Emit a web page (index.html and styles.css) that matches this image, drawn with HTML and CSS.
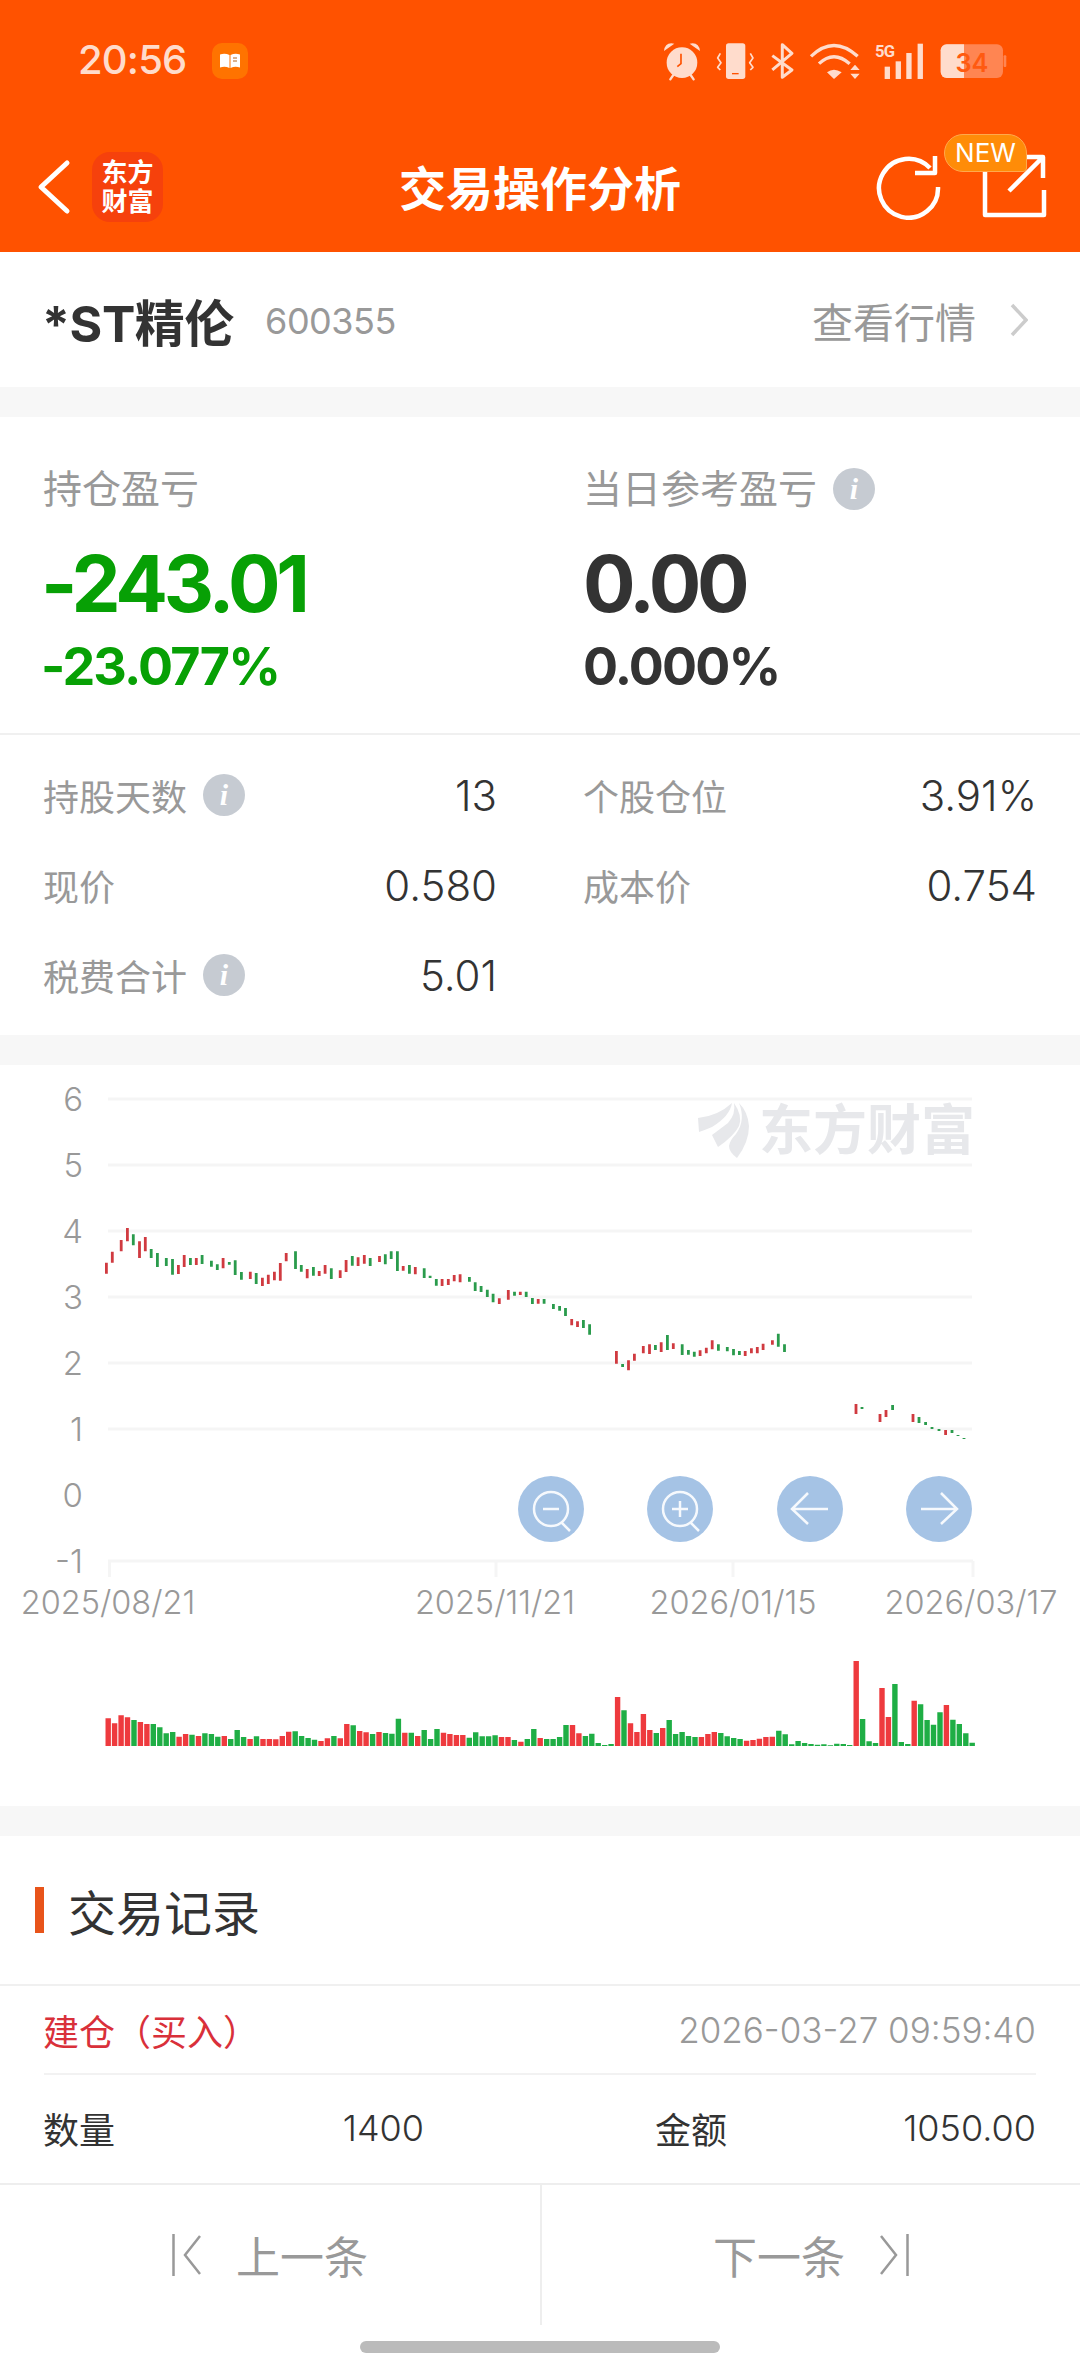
FILE: index.html
```html
<!DOCTYPE html>
<html lang="zh-CN">
<head>
<meta charset="utf-8">
<title>交易操作分析</title>
<link rel="stylesheet" href="styles.css">
</head>
<body>
<div class="app">
  <header class="head">
    <div class="status">
      <div class="status-left">
        <span class="time">20:56</span>
        <span class="note-icon">
          <svg viewBox="0 0 20 16" width="20" height="16"><path class="note-book" d="M0 1.5q5-1.5 9.5.5v13q-4.500-2-9.500-.5zM10.500 2q4.500-2 9.500-.5v13q-5-1.500-9.500.5z"/><path class="note-line" d="M13 5h4M13 8h4"/></svg>
        </span>
      </div>
      <div class="status-right">
        <svg class="si si-alarm" viewBox="100 120 115 120"><circle cx="157" cy="185" r="46" class="f"/><path class="f" d="M103 150Q106 122 134 128zM211 150Q208 122 180 128z"/><path class="s7" d="M131 222l-9 13M183 222l9 13"/><path class="hand" d="M154 158V188L143 197"/></svg>
        <svg class="si si-vib" viewBox="263 122 115 114"><rect x="293" y="126" width="58" height="107" rx="8" class="f"/><rect x="311" y="215" width="20" height="4" class="o"/><path class="s5" d="M276 156l-8 14 10 14-10 14 8 8M366 156l8 14-10 14 10 14-8 8"/></svg>
        <svg class="si si-bt" viewBox="424 124 74 112"><path class="s9" d="M431 165L490 208L461 230V132L490 158L431 208"/></svg>
        <svg class="si si-wifi" viewBox="543 122 156 114"><path class="s10" d="M549 165Q617 100 689 165M573 187Q617 145 665 187"/><path class="f" d="M597 213Q617 198 641 213L618 233zM667 206L681 190L695 206zM667 217H695L681 233z"/></svg>
        <svg class="si si-sig" viewBox="738 122 146 114"><text x="738" y="167" class="five-g">5G</text><rect x="767" y="196" width="16" height="37" class="f"/><rect x="800" y="180" width="16" height="53" class="f"/><rect x="832" y="155" width="16" height="78" class="f"/><rect x="866" y="127" width="16" height="106" class="f"/></svg>
        <svg class="si si-bat" viewBox="931 128 202 108"><rect x="933" y="132" width="187" height="101" rx="18" class="dim"/><rect x="1122" y="165" width="8" height="35" rx="3" class="dim"/><path class="f" d="M951 132H1003V233H951a18 18 0 0 1-18-18V150a18 18 0 0 1 18-18z"/><text x="1027" y="215" class="bat-num">34</text></svg>
      </div>
    </div>
    <nav class="nav">
      <div class="nav-left">
        <svg class="back" viewBox="0 0 34 56" width="34" height="56"><path d="M30 4L4 28L30 52"/></svg>
        <div class="logo"><span>东方</span><span>财富</span></div>
      </div>
      <h1 class="title">交易操作分析</h1>
      <div class="nav-right">
        <svg class="refresh" viewBox="0 0 66 66" width="66" height="66"><path d="M63 33A29.500 29.500 0 1 1 55 14"/><path d="M40 19H60V2"/></svg>
        <div class="share-wrap">
          <svg class="share" viewBox="0 0 66 66" width="66" height="66"><path d="M62 36V61H3V10"/><path d="M27 37L61 3M40 3H61V24"/></svg>
          <span class="new">NEW</span>
        </div>
      </div>
    </nav>
  </header>

  <section class="stock">
    <div class="stock-name"><strong>*ST精伦</strong><span class="code">600355</span></div>
    <div class="stock-link"><span>查看行情</span><svg class="chev" viewBox="0 0 18 34" width="18" height="34"><path d="M2 2L16 17L2 32"/></svg></div>
  </section>

  <section class="panel">
    <div class="pnl">
      <div class="pnl-col">
        <div class="pnl-label">持仓盈亏</div>
        <div class="pnl-big down">-243.01</div>
        <div class="pnl-pct down">-23.077%</div>
      </div>
      <div class="pnl-col">
        <div class="pnl-label">当日参考盈亏<i class="info">i</i></div>
        <div class="pnl-big">0.00</div>
        <div class="pnl-pct">0.000%</div>
      </div>
    </div>
    <div class="stats">
      <div class="stat"><span class="stat-l">持股天数<i class="info">i</i></span><span class="stat-v">13</span></div>
      <div class="stat"><span class="stat-l">个股仓位</span><span class="stat-v">3.91%</span></div>
      <div class="stat"><span class="stat-l">现价</span><span class="stat-v">0.580</span></div>
      <div class="stat"><span class="stat-l">成本价</span><span class="stat-v">0.754</span></div>
      <div class="stat"><span class="stat-l">税费合计<i class="info">i</i></span><span class="stat-v">5.01</span></div>
    </div>
  </section>

  <section class="chart">
    <svg class="chart-svg" viewBox="0 1065 1080 741" width="1080" height="741">
      <path class="flame" d="M698 1118Q718 1116 732 1103Q730 1116 712 1127Q705 1130 699 1132zM712 1135L728 1123Q736 1114 734 1103Q743 1116 739 1126Q734 1136 718 1147zM739 1103Q748 1112 749 1126Q749 1142 737 1158Q729 1152 729 1146Q730 1140 736 1134Q746 1120 739 1103z"/>
      <text x="759" y="1150" class="wm">东方财富</text>
      <path class="grid" d="M108 1099H972M108 1165H972M108 1231H972M108 1297H972M108 1363H972M108 1429H972M108 1561H973M109.500 1561V1577M496 1561V1577M733 1561V1577M973 1561V1577"/>
      <g class="ylab">
        <text x="83" y="1111">6</text><text x="83" y="1177">5</text><text x="83" y="1243">4</text><text x="83" y="1309">3</text><text x="83" y="1375">2</text><text x="83" y="1441">1</text><text x="83" y="1507">0</text><text x="83" y="1573">-1</text>
      </g>
      <g class="xlab">
        <text x="108" y="1614">2025/08/21</text><text x="495" y="1614">2025/11/21</text><text x="733" y="1614">2026/01/15</text><text x="971" y="1614">2026/03/17</text>
      </g>
      <path id="candle-r" class="candle-r"/>
      <path id="candle-g" class="candle-g"/>
      <path id="vol-r" class="vol-r"/>
      <path id="vol-g" class="vol-g"/>
      <g class="btn">
        <circle cx="551" cy="1509" r="33"/><circle cx="680" cy="1509" r="33"/><circle cx="810" cy="1509" r="33"/><circle cx="939" cy="1509" r="33"/>
      </g>
      <g class="btn-icon">
        <circle cx="551" cy="1509" r="17"/><path d="M562 1523L570 1531M543 1509H559"/>
        <circle cx="680" cy="1509" r="17"/><path d="M691 1523L699 1531M672 1509H688M680 1501V1517"/>
        <path d="M828 1509H793M808 1493L792 1509L808 1524"/>
        <path d="M921 1509H956M941 1493L957 1509L941 1524"/>
      </g>
    </svg>
  </section>

  <section class="trades">
    <div class="trades-head"><span class="mark"></span><h2>交易记录</h2></div>
    <div class="trade">
      <div class="trade-top"><span class="trade-type">建仓（买入）</span><span class="trade-date">2026-03-27 09:59:40</span></div>
      <div class="trade-grid">
        <div class="trade-cell cell-a"><span class="cell-l">数量</span><span class="cell-v">1400</span></div>
        <div class="trade-cell cell-b"><span class="cell-l">金额</span><span class="cell-v">1050.00</span></div>
      </div>
    </div>
  </section>

  <footer class="foot">
    <div class="pager">
      <div class="page-btn">
        <svg class="pg" viewBox="0 0 30 42" width="30" height="42"><path d="M1.500 0V42M28 2L13 21L28 40"/></svg>
        <span>上一条</span>
      </div>
      <div class="page-btn page-next">
        <span>下一条</span>
        <svg class="pg" viewBox="0 0 30 42" width="30" height="42"><path d="M28.500 0V42M2 2L17 21L2 40"/></svg>
      </div>
    </div>
    <div class="home"><span></span></div>
  </footer>
</div>
<script src="chart.js"></script>
</body>
</html>
```
FILE: styles.css
```css
* { box-sizing: border-box; }
html, body { margin: 0; padding: 0; }
body {
  width: 1080px;
  height: 2374px;
  overflow: hidden;
  background: #fff;
  font-family: Inter, "Noto Sans CJK SC", sans-serif;
  color: #333;
}
.app { display: flex; flex-direction: column; height: 2374px; background: #f7f7f7; }

/* header */
.head { background: #ff5200; height: 252px; flex: none; display: flex; flex-direction: column; }
.status { height: 122px; display: flex; justify-content: space-between; align-items: center; padding: 0 73px 0 78px; }
.status-left { display: flex; align-items: center; gap: 25px; }
.time { font-size: 40px; font-weight: 500; letter-spacing: -.8px; color: #ffdccc; line-height: 48px; margin-top: -3px; }
.note-icon { width: 36px; height: 36px; border-radius: 10px; background: #ff7300; display: flex; align-items: center; justify-content: center; }
.note-book { fill: #fff; }
.note-line { fill: none; stroke: #b5651d; stroke-width: 1; }
.status-right { display: flex; align-items: center; }
.si { display: block; flex: none; margin-top: 0; }
.si-alarm { width: 38.3px; height: 40px; }
.si-vib { width: 38.300px; height: 38px; margin-left: 15px; }
.si-bt { width: 24.600px; height: 37.300px; margin-left: 15px; }
.si-wifi { width: 52px; height: 38px; margin-left: 15px; }
.si-sig { width: 48.600px; height: 38px; margin-left: 14px; }
.si-bat { width: 67.300px; height: 36px; margin-left: 16px; }
.f { fill: #ffdccc; }
.dim { fill: #ff8552; }
.o { fill: #ff5200; }
.s7, .s5, .s9, .s10 { fill: none; stroke: #ffdccc; stroke-linejoin: round; }
.s7 { stroke-width: 7; stroke-linecap: round; }
.s5 { stroke-width: 5; }
.s9 { stroke-width: 9; }
.s10 { stroke-width: 10; }
.hand { fill: none; stroke: #ff5200; stroke-width: 5; }
.five-g { font-size: 50px; font-weight: 700; fill: #ffdccc; font-family: "Roboto", sans-serif; letter-spacing: -2px; }
.bat-num { font-size: 76px; font-weight: 600; fill: #ff5a10; text-anchor: middle; font-family: Inter, sans-serif; }

.nav { height: 130px; position: relative; display: flex; align-items: center; justify-content: space-between; padding: 0 32px 0 37px; }
.nav-left { display: flex; align-items: center; gap: 21px; }
.back { display: block; fill: none; stroke: #fff; stroke-width: 5; stroke-linecap: round; stroke-linejoin: round; }
.logo { width: 71px; height: 70px; background: #f6410c; border-radius: 18px; display: flex; flex-direction: column; align-items: center; justify-content: center; color: #fff; font-size: 26px; font-weight: 700; line-height: 29px; }
.title { position: absolute; left: 0; right: 0; top: 0; bottom: 4px; margin: 0; display: flex; align-items: center; justify-content: center; font-size: 47px; font-weight: 700; color: #fff; pointer-events: none; }
.nav-right { display: flex; align-items: center; gap: 41px; }
.refresh, .share { display: block; fill: none; stroke: #fff; stroke-width: 4.500; stroke-linejoin: round; }
.share-wrap { position: relative; width: 66px; height: 66px; }
.new { position: absolute; left: -38px; top: -20px; width: 83px; height: 38px; background: #ff8c08; border: 1px solid #ffa94d; border-radius: 19px 19px 4px 19px; color: #fff; font-size: 26px; line-height: 35px; text-align: center; }

/* stock row */
.stock { height: 135px; flex: none; background: #fff; display: flex; align-items: center; justify-content: space-between; padding: 0 52px 0 42px; }
.stock-name { display: flex; align-items: center; gap: 31px; }
.stock-name strong { font-size: 50px; font-weight: 700; color: #333; letter-spacing: -.4px; }
.code { font-size: 36px; letter-spacing: -.5px; color: #999; padding-top: 2px; }
.stock-link { display: flex; align-items: center; gap: 34px; font-size: 41px; color: #999; }
.chev { display: block; fill: none; stroke: #ccc; stroke-width: 3.500; }

/* panel */
.panel { margin-top: 30px; background: #fff; flex: none; height: 618px; }
.pnl { display: grid; grid-template-columns: 540px 1fr; padding: 48px 43px 0; height: 318px; border-bottom: 2px solid #f0f0f0; }
.pnl-label { font-size: 39px; line-height: 48px; color: #999; display: flex; align-items: center; }
.pnl-label .info { margin-left: 16px; }
.pnl-big { font-size: 78px; line-height: 90px; font-weight: 700; letter-spacing: -4.200px; margin-top: 26px; color: #333; }
.pnl-pct { font-size: 52px; line-height: 60px; font-weight: 700; letter-spacing: -1.800px; margin-top: 8px; color: #333; }
.pnl-big.down, .pnl-pct.down { margin-left: -2px; }
.down { color: #07a005; }
.info { display: inline-block; width: 42px; height: 42px; border-radius: 50%; background: #c6cbd2; color: #fff; font: italic 700 30px/42px "Liberation Serif", serif; text-align: center; flex: none; }
.stats { display: grid; grid-template-columns: 454px 454px; column-gap: 86px; padding: 15px 0 0 43px; grid-auto-rows: 90px; }
.stat { display: flex; align-items: center; justify-content: space-between; }
.stat-l { font-size: 36px; color: #999; display: flex; align-items: center; }
.stat-l .info { margin-left: 16px; }
.stat-v { font-size: 42px; font-weight: 300; color: #333; }

/* chart */
.chart { margin-top: 30px; background: #fff; flex: none; height: 741px; }
.chart-svg { display: block; }
.flame { fill: #e7e8eb; }
.wm { font-size: 54px; font-weight: 700; fill: #e7e8eb; font-family: "Noto Sans CJK SC", sans-serif; }
.grid { fill: none; stroke: #f5f5f5; stroke-width: 3; }
.ylab text { font-size: 33px; font-weight: 300; fill: #999; text-anchor: end; }
.xlab text { font-size: 32.500px; font-weight: 300; fill: #999; text-anchor: middle; }
.candle-r { fill: none; stroke: #d03a40; stroke-width: 2.800; }
.candle-g { fill: none; stroke: #2a9b4c; stroke-width: 2.800; }
.vol-r { fill: none; stroke: #ee3a3e; stroke-width: 5.400; }
.vol-g { fill: none; stroke: #1fae45; stroke-width: 5.400; }
.btn circle { fill: #5b92cf; fill-opacity: .55; }
.btn-icon { fill: none; stroke: #fff; stroke-width: 2.500; stroke-opacity: .9; }

/* trades */
.trades { margin-top: 30px; background: #fff; flex: 1; min-height: 0; overflow: hidden; }
.trades-head { height: 150px; border-bottom: 2px solid #f0f0f0; display: flex; align-items: center; padding-left: 35px; }
.mark { width: 9px; height: 46px; background: #e8541a; }
.trades-head h2 { margin: 0 0 0 24px; font-size: 48px; font-weight: 400; color: #333; }
.trade { padding: 0 44px; }
.trade-top { height: 89px; display: flex; align-items: center; justify-content: space-between; border-bottom: 2px solid #f2f2f2; }
.trade-type { font-size: 36px; color: #d9303a; margin-left: -1px; }
.trade-date { font-size: 35px; font-weight: 300; color: #999; }
.trade-grid { display: grid; grid-template-columns: 380px 1fr; column-gap: 232px; height: 106px; }
.trade-cell { display: flex; align-items: center; justify-content: space-between; }
.cell-l { font-size: 36px; color: #333; margin-left: -1px; }
.cell-v { font-size: 36px; font-weight: 300; color: #333; }

/* footer */
.foot { flex: none; height: 191px; background: #fff; border-top: 2px solid #eee; }
.pager { display: grid; grid-template-columns: 1fr 1fr; height: 140px; }
.page-btn { display: flex; align-items: center; justify-content: center; gap: 34px; font-size: 44px; color: #999; }
.page-btn + .page-btn { border-left: 2px solid #eee; }
.pg { display: block; fill: none; stroke: #999; stroke-width: 2.500; }
.home { display: flex; justify-content: center; padding-top: 16px; }
.home span { width: 360px; height: 12px; border-radius: 6px; background: #bbb; }
```
FILE: chart.js
```js
// Kline and volume series, in page coordinates.
// [x, top, bottom, up?]: x in px, y on a 1/3 px grid with origin 1060
var klines = [
[106.4,608,641,1],[112.3,575,608,1],[121.2,540,574,1],[127.4,504,544,1],[133.3,523,556,0],[139.5,544,594,1],[145.3,531,574,1],[151.2,567,594,0],[157.4,579,621,0],[166.3,594,618,0],
[172.5,597,644,0],[178.4,615,642,1],[184.2,585,621,1],[190.4,594,615,0],[196.3,594,615,1],[202.1,585,612,0],[211.4,602,620,0],[217.3,613,630,0],[223.1,594,625,1],[229.3,606,614,0],
[235.2,601,645,0],[241.4,636,659,0],[250.3,635,657,1],[256.2,639,672,0],[262.4,653,678,1],[268.3,644,672,1],[274.4,635,661,1],[280.3,609,662,1],[286.2,579,604,1],[295.5,574,627,0],
[301.3,615,635,0],[307.2,627,655,1],[313.4,621,647,0],[319.2,633,648,1],[325.1,615,641,1],[331.3,625,657,0],[340.2,631,654,1],[346.1,600,636,1],[352.3,588,617,0],[358.1,592,618,1],
[364.3,585,611,1],[370.2,594,618,0],[379.5,588,606,1],[385.3,583,613,0],[391.2,574,597,0],[397.4,574,633,0],[403.2,618,632,1],[409.4,615,641,0],[415.3,621,643,1],[424.2,625,654,0],
[430.1,647,654,0],[436.3,657,677,0],[442.1,657,678,1],[448.3,657,675,1],[454.2,645,664,1],[460.1,643,667,1],[469.4,651,665,0],[475.2,667,693,0],[481.1,678,696,0],[487.3,689,711,0],
[493.1,701,727,0],[499.3,715,732,1],[508.3,690,719,1],[514.5,695,707,0],[520.3,695,705,1],[526.2,695,711,0],[532.4,714,732,0],[538.2,717,731,1],[544.1,717,731,0],[553.4,732,747,0],
[559.6,738,752,0],[565.5,744,768,0],[571.7,777,796,1],[577.5,784,801,1],[583.4,780,804,0],[589.6,793,824,0],[616.4,873,911,1],[622.6,912,921,0],[628.5,901,931,1],[634.4,881,902,1],
[643.3,858,880,1],[649.5,853,882,1],[655.4,855,870,0],[661.2,847,876,1],[667.4,825,870,0],[673.3,850,867,1],[682.2,853,885,0],[688.4,870,884,0],[694.3,875,890,0],[700.1,871,888,1],
[706.3,863,880,1],[712.2,841,868,1],[718.4,853,872,0],[727.3,861,874,0],[733.5,867,886,0],[739.4,873,885,0],[745.2,873,888,1],[751.4,865,880,1],[757.3,861,880,1],[763.1,851,870,1],
[772.4,841,854,1],[778.3,821,860,0],[784.5,853,876,0],
[856,1032,1062,1],[862,1041,1047,0],[880,1062,1086,1],[886,1050,1071,1],[892.6,1035,1050,0],[913,1062,1086,1],[919,1071,1089,0],[925.6,1086,1095,0],[932,1101,1107,0],
[939,1107,1113,0],[945.6,1110,1125,1],[952,1110,1119,0],[958,1125,1128,0],[964,1134,1137,0]
];
// [top, up?]: top on a 1/3 px grid with origin 1640
var bars = [
[235,1],[250,1],[226,1],[232,1],[240,0],[246,1],[252,1],[252,0],[262,0],[280,0],[276,0],[290,1],[282,1],[284,0],[288,1],[280,0],[282,0],[290,0],[288,1],[297,0],
[270,0],[291,0],[297,1],[289,0],[297,1],[297,1],[298,1],[288,1],[275,1],[274,0],[288,0],[294,0],[299,0],[303,1],[295,1],[288,0],[295,1],[252,1],[256,0],[273,1],
[277,1],[282,0],[276,1],[279,0],[281,0],[236,0],[278,1],[278,0],[288,1],[270,0],[297,0],[267,0],[278,1],[282,1],[285,1],[285,1],[293,0],[277,0],[289,0],[289,0],
[286,0],[291,1],[291,1],[300,0],[305,1],[297,0],[267,0],[294,1],[297,0],[297,0],[291,0],[255,0],[255,1],[280,1],[288,0],[281,0],[309,0],[315,0],[312,0],[171,1],
[211,0],[250,1],[276,1],[222,1],[270,1],[279,0],[264,1],[240,0],[282,0],[276,0],[288,0],[291,0],[291,1],[282,1],[276,1],[279,0],[289,0],[294,0],[297,0],[302,1],
[300,1],[296,1],[291,1],[290,1],[272,0],[283,0],[313,0],[303,0],[309,0],[312,0],[314,0],[313,0],[316,0],[311,0],[312,0],[315,0],[63,1],[237,0],[304,0],[309,0],
[144,1],[231,1],[132,0],[306,0],[312,0],[182,1],[193,0],[240,0],[254,0],[217,0],[195,1],[239,0],[252,0],[280,0],[308,0]
];
var kr = '', kg = '';
klines.forEach(function (k) {
  var seg = 'M' + k[0] + ' ' + (1060 + k[1] / 3).toFixed(1) + 'V' + (1060 + k[2] / 3).toFixed(1);
  if (k[3]) { kr += seg; } else { kg += seg; }
});
var vr = '', vg = '';
bars.forEach(function (b, i) {
  var seg = 'M' + (108.2 + i * 6.448).toFixed(1) + ' 1746V' + (1640 + b[0] / 3).toFixed(1);
  if (b[1]) { vr += seg; } else { vg += seg; }
});
document.getElementById('candle-r').setAttribute('d', kr);
document.getElementById('candle-g').setAttribute('d', kg);
document.getElementById('vol-r').setAttribute('d', vr);
document.getElementById('vol-g').setAttribute('d', vg);
```
